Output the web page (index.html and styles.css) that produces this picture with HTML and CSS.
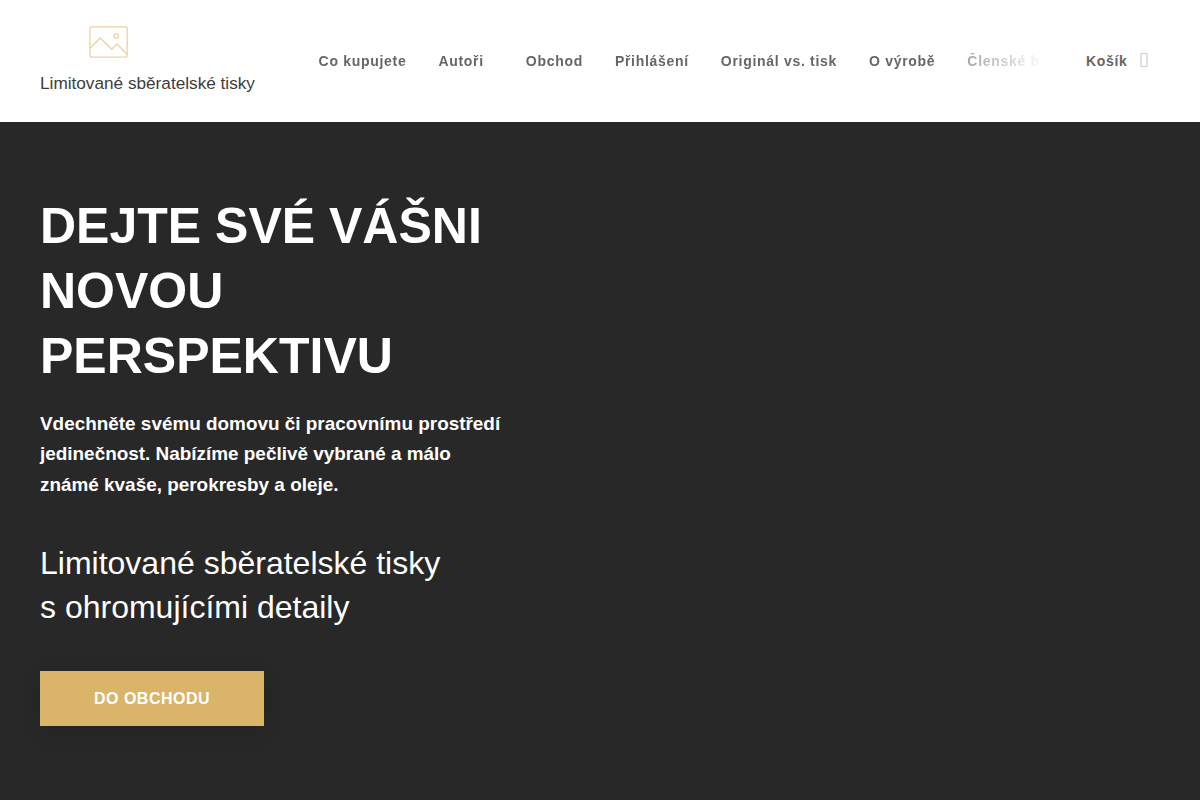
FILE: index.html
```html
<!DOCTYPE html>
<html lang="cs">
<head>
    <meta charset="UTF-8">
    <meta name="viewport" content="width=device-width, initial-scale=1.0">
    <title>Limitované sběratelské tisky</title>
    <link rel="stylesheet" href="styles.css">
</head>
<body>
    <header class="header">
        <a class="logo" href="#">
            <svg class="logo-icon" width="40" height="34" viewBox="0 0 40 34" fill="none" stroke="#ebd3a4" stroke-width="1.3">
                <rect x="0.9" y="1.9" width="37.3" height="30.3" rx="2.2"/>
                <circle cx="27.2" cy="11" r="2.2"/>
                <path d="M0.9 23.5L11.2 13L22.7 24.3L28 19L38.2 29.5"/>
            </svg>
            <span class="logo-text">Limitované sběratelské tisky</span>
        </a>
        <nav class="nav">
            <div class="nav-scroll">
                <a href="#">Co kupujete</a>
                <a class="has-menu" href="#">Autoři</a>
                <a href="#">Obchod</a>
                <a href="#">Přihlášení</a>
                <a href="#">Originál vs. tisk</a>
                <a href="#">O výrobě</a>
                <a href="#">Členské b</a>
            </div>
            <a class="cart" href="#">Košík</a>
            <span class="cart-icon"></span>
        </nav>
    </header>
    <main class="hero">
        <div class="hero-content">
            <h1>DEJTE SVÉ VÁŠNI NOVOU PERSPEKTIVU</h1>
            <p class="lead">Vdechněte svému domovu či pracovnímu prostředí jedinečnost. Nabízíme pečlivě vybrané a málo známé kvaše, perokresby a oleje.</p>
            <h2>Limitované sběratelské tisky<br>s ohromujícími detaily</h2>
            <a class="button" href="#">DO OBCHODU</a>
        </div>
    </main>
</body>
</html>
```
FILE: styles.css
```css
* {
    box-sizing: border-box;
}
body {
    margin: 0;
    height: 100vh;
    display: flex;
    flex-direction: column;
    overflow: hidden;
    font-family: "Liberation Sans", Arial, sans-serif;
    background-color: #fff;
}
a {
    color: inherit;
    text-decoration: none;
}
.header {
    display: flex;
    flex: none;
    height: 122px;
    padding: 0 40px;
}
.logo {
    width: 215px;
    padding-top: 25px;
    color: #3c3c3c;
    white-space: nowrap;
}
.logo-icon {
    display: block;
    margin-left: 49px;
}
.logo-text {
    display: block;
    margin-top: 14px;
    font-size: 17.2px;
    line-height: 20px;
}
.nav {
    display: flex;
    align-items: center;
    margin-left: 63.6px;
    font-size: 14px;
    font-weight: bold;
    letter-spacing: 0.7px;
    color: #666;
    white-space: nowrap;
}
.nav-scroll {
    display: flex;
    gap: 32px;
    width: 735.4px;
    overflow: hidden;
    /* fade out the end of the menu */
    -webkit-mask-image: linear-gradient(to right, #000 620px, rgba(0, 0, 0, 0.53) 654px, rgba(0, 0, 0, 0.2) 702px, transparent 726px);
    mask-image: linear-gradient(to right, #000 620px, rgba(0, 0, 0, 0.53) 654px, rgba(0, 0, 0, 0.2) 702px, transparent 726px);
}
.has-menu {
    margin-right: 10px;
}
.cart {
    margin-left: 32px;
}
.cart-icon {
    width: 8px;
    height: 14px;
    margin: 0 0 2px 12px;
    border: 1px solid #ccc;
    border-width: 1px 2px;
    border-color: #ccc #e2e2e2;
}
.hero {
    flex: 1;
    padding: 72px 40px 0;
    color: #fff;
    background-color: #282828;
}
.hero-content {
    width: 470px;
}
h1 {
    margin: 0;
    font-size: 50px;
    line-height: 65px;
}
.lead {
    margin: 20px 0 41px;
    font-size: 18.92px;
    font-weight: bold;
    line-height: 30.4px;
}
h2 {
    margin: 0 0 42px;
    font-size: 32px;
    font-weight: normal;
    line-height: 44px;
}
.button {
    display: block;
    width: 224px;
    height: 55px;
    background-color: #d9b469;
    box-shadow: 0 5px 25px rgba(0, 0, 0, 0.12);
    font-size: 16px;
    font-weight: bold;
    line-height: 55px;
    letter-spacing: 0.5px;
    text-align: center;
}
```
